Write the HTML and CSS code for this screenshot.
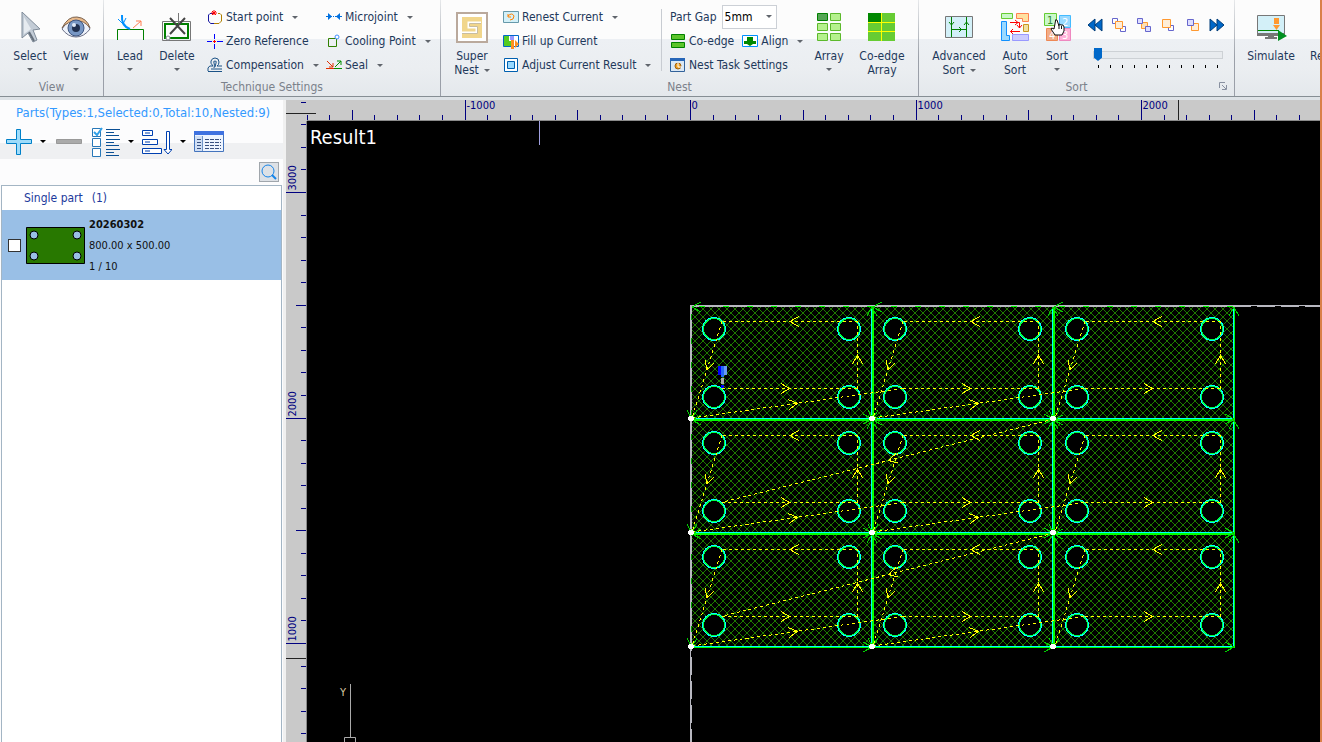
FILE: index.html
```html
<!DOCTYPE html>
<html lang="en">
<head>
<meta charset="utf-8">
<title>Nesting workspace</title>
<link rel="stylesheet" href="styles.css">
</head>
<body>
<header class="ribbon">
  <section class="group group-view">
    <div class="tools">
      <button class="big w46"><svg width="32" height="32"><path d="M7 2V28L13 23L18 32L22 30L18 20L25 19Z" transform="translate(1 -2)" fill="#c3ccd6" stroke="#7f8b99"/><path d="M10 5V22L17 17Z" fill="#e6ebf0"/><path d="M15 20L20 29" stroke="#66707c" stroke-width="2"/></svg><span>Select</span><i class="caret"></i></button>
      <button class="big w46"><svg width="32" height="32"><path d="M2 17Q9 5 18 6Q26 7 30 17Q24 25 16 25Q8 25 2 17Z" fill="#eef2fa" stroke="#6b6f86"/><path d="M2 16Q8 4 17 5Q27 6 30 16Q24 8 16 9Q8 9 2 16Z" fill="#e8b98a" stroke="#7b6350"/><circle cx="16" cy="16" r="8" fill="#7897c4" stroke="#3d5580"/><circle cx="16" cy="16" r="4" fill="#20304f"/><circle cx="14" cy="13" r="2" fill="#dfe9f7"/></svg><span>View</span><i class="caret"></i></button>
    </div>
    <h2>View</h2>
  </section>
  <section class="group group-tech">
    <div class="tools">
      <button class="big w46"><svg width="32" height="32" fill="none"><path d="M3.500 28V17.500H29.500V28" stroke="#008000"/><path d="M8 3Q7 14 16 17" stroke="#0090ff" stroke-width="2"/><path d="M4 7L9 12L12 6" stroke="#0090ff"/><path d="M19 16L27 9M22 9H27V14" stroke="#ff7f50"/></svg><span>Lead</span><i class="caret"></i></button>
      <button class="big w48"><svg width="32" height="32" fill="none"><path d="M1.500 9.500H29.500V28.500H1.500Z" stroke="#777"/><path d="M4 12H27V26H4Z" stroke="#008000" stroke-width="2"/><path d="M17.500 1V12" stroke="#777"/><path d="M9 6L24 22M24 6L9 22" stroke="#444" stroke-width="2"/><circle cx="7" cy="26" r="2" stroke="#889" fill="#fff"/></svg><span>Delete</span><i class="caret"></i></button>
      <div class="rows rows-start">
        <button class="small"><svg width="16" height="16" fill="none"><path d="M6 4.500H3L1.500 6V12L3.500 14.500H7" stroke="#1616a0"/><path d="M7 14.500H12L14.500 12V6L13 4.500H11" stroke="#b08000"/><path d="M5 2L9 6M9 2L5 6M7 1V6M4 4H10" stroke="#f00"/></svg>Start point<i class="caret"></i></button>
        <button class="small"><svg width="16" height="16" class="crisp"><path d="M7.500 1V6M7.500 11V16M0 8.500H5M10 8.500H16" stroke="#0000ff"/><path d="M6 8.500H9M7.500 7V10" stroke="#ff0000"/></svg>Zero Reference</button>
        <button class="small"><svg width="16" height="16" fill="none" stroke="#1b5286"><path d="M1 14.500H15M1 14V11Q2 8 6 9Q3 6 4 4Q5 1 8 1Q12 1 12 5Q12 8 10 9H15M4 12H15M7 11Q8 8 7 6Q6 4 8 4Q10 4 9 6L8 10"/></svg>Compensation<i class="caret"></i></button>
      </div>
      <div class="rows">
        <button class="small"><svg width="16" height="16"><path d="M0 7.500H6M10 7.500H16" stroke="#0070e0" stroke-width="1"/><path d="M2 4L6 7.500L2 11ZM14 4L10 7.500L14 11Z" fill="#0070e0"/><path d="M7 7.500H10" stroke="#0070e0" stroke-dasharray="1 1"/></svg>Microjoint<i class="caret"></i></button>
        <button class="small"><svg width="16" height="16" fill="none"><path d="M2.500 5.500H10.500V13.500H2.500Z" stroke="#308000"/><circle cx="11" cy="4" r="2" stroke="#4090ff" fill="#fff"/></svg>Cooling Point<i class="caret"></i></button>
        <button class="small"><svg width="16" height="16" fill="none"><path d="M0 11.500H16" stroke="#009000"/><path d="M0 11.500H8" stroke="#e03000"/><path d="M1 4L7 10M7 6V10H3" stroke="#e03000"/><path d="M9 10L15 4M11 4H15V8" stroke="#009000"/></svg>Seal<i class="caret"></i></button>
      </div>
    </div>
    <h2>Technique Settings</h2>
  </section>
  <section class="group group-nest">
    <div class="tools">
      <button class="big w50"><svg width="32" height="32"><path d="M1 1H31V30H1Z" fill="#fff" stroke="#baa99c" stroke-width="2"/><path d="M6 5H26V26H6Z" fill="#f1d68c"/><path d="M25 10.500H12.500V15.500H20.500V20.500H6" fill="none" stroke="#fff" stroke-width="2"/><path d="M25 11.500H13.500V14.500H21.500V21.500H6" fill="none" stroke="#c8bda0"/></svg><span>Super</span><span class="line">Nest<i class="caret"></i></span></button>
      <div class="rows rows-nest">
        <button class="small"><svg width="16" height="16" fill="none"><path d="M.5 2.500H15.500V13.500H.5Z" fill="#d3f0f8" stroke="#6699aa"/><path d="M5 5V8H8M5 7Q9 3 11 7Q11 11 7 11" stroke="#ff8000"/></svg>Renest Current<i class="caret"></i></button>
        <button class="small"><svg width="16" height="16"><path d="M.5 2.500H15.500V13.500H.5Z" fill="#fff" stroke="#0068c9"/><path d="M1 3H6V8H10V13H1Z" fill="#5c2"/><path d="M7 3H11V7H7Z" fill="#99f"/><path d="M8 7H11V16H8ZM12 7L16 11L12 15Z" fill="#ff9020"/></svg>Fill up Current</button>
        <button class="small"><svg width="16" height="16"><path d="M1.500 1.500H14.500V14.500H1.500Z" fill="#fff" stroke="#0060b0"/><path d="M4.500 4.500H11.500V11.500H4.500Z" fill="#99d9ff" stroke="#0060b0"/></svg>Adjust Current Result<i class="caret"></i></button>
      </div>
      <div class="rows rows-gap">
        <div class="gap-row"><label for="gap">Part Gap</label><span class="combo"><select id="gap"><option>5mm</option></select><i class="caret"></i></span></div>
        <div class="pair"><button class="small"><svg width="16" height="16"><path d="M1.500 1.500H14.500V6.500H1.500ZM1.500 9.500H14.500V14.500H1.500Z" fill="#5cc52b" stroke="#008000"/></svg>Co-edge</button><button class="small"><svg width="16" height="16"><path d="M.5 2.500H15.500V13.500H.5Z" fill="#fff" stroke="#0090ff"/><path d="M5 4H11V8H14V11H2V8H5ZM5 11H11L8 13Z" fill="#008800"/></svg>Align<i class="caret"></i></button></div>
        <button class="small"><svg width="16" height="16"><path d="M.5 1.500H14.500V14.500H.5Z" fill="#dbe8f5" stroke="#33629a"/><path d="M0 1H15V4H0Z" fill="#2766b8"/><circle cx="8" cy="9" r="3" fill="#f0a020" stroke="#a06010"/><path d="M8 5V10H12" stroke="#fff" fill="none"/></svg>Nest Task Settings</button>
      </div>
      <button class="big w50"><svg width="32" height="32" fill="#b5f18d" stroke="#5cb92c"><path d="M4.500 1.500H14.500V8.500H4.500Z" fill="#55a555" stroke="#008000"/><path d="M17.500 1.500H27.500V8.500H17.500ZM4.500 11.500H14.500V18.500H4.500ZM17.500 11.500H27.500V18.500H17.500ZM4.500 21.500H14.500V28.500H4.500ZM17.500 21.500H27.500V28.500H17.500Z"/></svg><span>Array</span><i class="caret"></i></button>
      <button class="big w56"><svg width="32" height="32"><path d="M2 1H29V29H2Z" fill="#66cc33"/><path d="M2 1H15V10H2Z" fill="#008800"/><path d="M15.500 1V29M2 10.500H29M2 19.500H29" stroke="#ff0"/></svg><span>Co-edge</span><span class="line">Array</span></button>
    </div>
    <h2>Nest</h2>
  </section>
  <section class="group group-sort">
    <div class="tools">
      <button class="big w80"><svg width="32" height="32" fill="none"><path d="M2.500 4.500H29.500V25.500H2.500Z" fill="#d3f0f8" stroke="#777"/><path d="M8.500 5V25M23.500 5V25M8.500 17.500H23.500M6 10L8.500 13L11 10M21 13L23.500 10L26 13M16 15L18.500 17.500L16 20" stroke="#008000"/></svg><span>Advanced</span><span class="line">Sort<i class="caret"></i></span></button>
      <button class="big w32"><svg width="32" height="32"><path d="M2.500 1.500H13.500V6.500H2.500Z" fill="#caf8ca" stroke="#6c3"/><path d="M17.500 1.500H29.500V9.500H23.500V6.500H17.500Z" fill="#ffe0a0" stroke="#ff8050"/><path d="M2.500 9.500H7.500V23.500H10.500V28.500H2.500Z" fill="#99d9ff" stroke="#1090ff"/><path d="M24.500 12.500H29.500V19.500H24.500Z" fill="#f0e0a0" stroke="#c89820"/><path d="M13.500 22.500H29.500V28.500H13.500Z" fill="#ccf" stroke="#99f"/><path d="M11 10.500H20.500V16M18 13L20.500 16L23 13M16 8L19 10.500L16 13M21 19.500H11.500M14 17L11.500 19.500L14 22" fill="none" stroke="#f00"/></svg><span>Auto</span><span class="line">Sort</span></button>
      <button class="big w52"><svg width="32" height="32"><path d="M3.500 1.500H15.500V13.500H3.500Z" fill="#caf8ca" stroke="#6c3"/><path d="M18.500 3.500H29.500V15.500H18.500Z" fill="#99d9ff" stroke="#4bf"/><path d="M5.500 16.500H16.500V28.500H5.500Z" fill="#f2ad87" stroke="#ee8855"/><path d="M18.500 16.500H29.500V28.500H18.500Z" fill="#ffb0d8" stroke="#ee88c0"/><g font-size="11"><text x="6" y="12" fill="#383">1</text><text x="21" y="14" fill="#fff">2</text><text x="8" y="27" fill="#fff">4</text><text x="21" y="27" fill="#fff">3</text></g><path d="M14.500 9Q14 7 16 8L18 14V12L20 13L22 13L23 15V19L21 23H14L10 17Q10 15 13 17Z" fill="#fff" stroke="#111"/><path d="M18 14V17M20.500 14V17" stroke="#111"/></svg><span>Sort</span><i class="caret"></i></button>
      <div class="sequence">
        <div class="steps">
          <button aria-label="First"><svg width="16" height="16"><path d="M8 2V14L1 8ZM15 2V14L8 8Z" fill="#0068c9" stroke="#003c78"/></svg></button>
          <button aria-label="Send back"><svg width="16" height="16" fill="#fff"><path d="M1.500 1.500H6.500V6.500H1.500ZM9.500 9.500H14.500V14.500H9.500Z" stroke="#66c"/><path d="M4.500 4.500H11.500V11.500H4.500Z" fill="#ffeed8" stroke="#ff9930"/></svg></button>
          <button aria-label="Step back"><svg width="16" height="16"><path d="M5.500 5.500H11.500V11.500H5.500Z" fill="#ffe0b0" stroke="#ff9930"/><path d="M1.500 1.500H6.500V6.500H1.500ZM9.500 9.500H14.500V14.500H9.500Z" fill="#ddf" stroke="#66c"/></svg></button>
          <button aria-label="Bring front"><svg width="16" height="16"><path d="M8.500 8.500H13.500V13.500H8.500Z" fill="#fff" stroke="#66c"/><path d="M2.500 2.500H10.500V10.500H2.500Z" fill="#ffeed8" stroke="#ff9930"/></svg></button>
          <button aria-label="Step forward"><svg width="16" height="16"><path d="M6.500 6.500H13.500V13.500H6.500Z" fill="#ffeed8" stroke="#ff9930"/><path d="M2.500 2.500H8.500V8.500H2.500Z" fill="#ddf" stroke="#66c"/></svg></button>
          <button aria-label="Last"><svg width="16" height="16"><path d="M1 2V14L8 8ZM8 2V14L15 8Z" fill="#0068c9" stroke="#003c78"/></svg></button>
        </div>
        <input class="slider" type="range" min="0" max="10" value="0" aria-label="Sort position">
        <div class="marks"><i></i><i></i><i></i><i></i><i></i><i></i><i></i><i></i><i></i><i></i><i></i></div>
      </div>
    </div>
    <h2>Sort</h2>
    <button class="launcher" aria-label="Sort options"><svg width="8" height="8" fill="none" stroke="#8890a0"><path d="M.5 6V.5H6M3 3L7 7M7.500 3V7.500H3"/></svg></button>
  </section>
  <section class="group group-run">
    <div class="tools">
      <button class="big w72"><svg width="32" height="32"><path d="M2.500 3.500H29.500V22.500H2.500Z" fill="#d3f0f8" stroke="#777"/><path d="M2 21H30V24H2Z" fill="#777"/><path d="M3 18.500H24" stroke="#008800"/><path d="M13 24H19V25H22V27H10V25H13Z" fill="#777"/><path d="M19 6H24V12H19ZM18 13H25L21.500 18Z" fill="#ff9930"/><path d="M23 18L32 24L23 29Z" fill="#009020"/></svg><span>Simulate</span></button>
      <button class="big cut"><svg width="32" height="32"><path d="M12 3H31V23H12Z" fill="#58b0f0"/></svg><span>Re</span></button>
    </div>
  </section>
</header>
<main class="workspace">
  <aside class="sidebar">
    <h1>Parts(Types:1,Selected:0,Total:10,Nested:9)</h1>
    <div class="partbar">
      <button aria-label="Add part"><svg width="26" height="26"><path d="M10.500 .5H14.500V10.500H25.500V14.500H14.500V25.500H10.500V14.500H.5V10.500H10.500Z" fill="#9edcfb" stroke="#0080c8"/></svg><i class="caret dark"></i></button>
      <button aria-label="Remove part"><svg width="26" height="26"><path d="M.5 10.500H25.500V14.500H.5Z" fill="#aaa" stroke="#999"/></svg></button>
      <button aria-label="Check parts"><svg width="28" height="30"><path d="M.5 1.500H8.500V9.500H.5ZM.5 11.500H8.500V19.500H.5ZM.5 21.500H8.500V29.500H.5Z" fill="#fff" stroke="#2878b8"/><path d="M2 5L5 8L10 1" stroke="#30a0e8" stroke-width="2" fill="none"/><path d="M14 2.500H28M14 5.500H22M14 8.500H27M14 12.500H28M14 15.500H22M14 18.500H27M14 22.500H28M14 25.500H22M14 28.500H27" stroke="#0a4f94"/></svg><i class="caret dark"></i></button>
      <button aria-label="Order parts"><svg width="30" height="26" fill="#fff" stroke="#0040b0"><path d="M.5 1.500H10.500V6.500H.5ZM.5 10.500H15.500V15.500H.5ZM.5 19.500H19.500V24.500H.5ZM3 4H8M3 13H8M3 22H8M24.500 2.500H27.500V20.500H30L26 25L22 20.500H24.500Z"/></svg><i class="caret dark"></i></button>
      <button aria-label="Part table"><svg width="30" height="22"><path d="M.5 .5H29.500V20.500H.5Z" fill="#edf4ff" stroke="#4474bd"/><path d="M0 0H30V4H0Z" fill="#3f72e0"/><path d="M1 5H8V20H1Z" fill="#d0dff5"/><path d="M8.500 5V20" stroke="#6f94c8"/><path d="M3 8.500H7M3 11.500H7M3 14.500H7M3 17.500H7M11 8.500H27M11 11.500H27M11 14.500H27M11 17.500H27" stroke="#385080" stroke-dasharray="4 1"/></svg></button>
    </div>
    <div class="searchbar"><button class="search" aria-label="Search"><svg width="18" height="18" fill="none" stroke="#1684e8"><circle cx="8" cy="8" r="6"/><path d="M12 12L16 16" stroke-width="2"/></svg></button></div>
    <div class="partlist">
      <h2>Single part<span>(1)</span></h2>
      <div class="part">
        <input id="p1" type="checkbox">
        <svg width="60" height="38" fill="#99bfe6" stroke="#000"><path d="M.5 1.500H58.500V37.500H.5Z" fill="#287800"/><circle cx="8" cy="9" r="4"/><circle cx="51" cy="9" r="4"/><circle cx="8" cy="30" r="4"/><circle cx="51" cy="30" r="4"/></svg>
        <label for="p1"><b>20260302</b><span>800.00 x 500.00</span><span>1 / 10</span></label>
      </div>
    </div>
  </aside>
  <div class="ruler-corner"><svg width="100%" height="100%"><path d="M15 2.500H20" class="tick"/><path d="M0 13.500H30" class="pos"/></svg></div>
  <div class="ruler-top"><svg id="ruler-x" width="100%" height="100%"></svg></div>
  <div class="ruler-left"><svg id="ruler-y" width="100%" height="100%"></svg></div>
  <div class="canvas">
    <svg id="scene" width="100%" height="100%">
      <defs><pattern id="hatch" width="8" height="8" patternUnits="userSpaceOnUse"><path d="M-1 -1L9 9M9 -1L-1 9" class="hatch-line crisp"/></pattern></defs>
      <text x="3" y="23" class="result">Result1</text>
      <path d="M232.500 0V24" stroke="#a0a0e0"/>
    </svg>
  </div>
</main>
<script src="script.js"></script>
</body>
</html>
```
FILE: styles.css
```css
* { box-sizing: border-box; }
body {
  margin: 0;
  height: 100vh;
  display: flex;
  flex-direction: column;
  overflow: hidden;
  border-right: 2px solid #d98048;
  font: 12px/14px "DejaVu Sans Condensed", "Noto Sans", sans-serif;
  color: #1e395b;
  background: #f0f0f0;
}
button { border: 0; padding: 0; background: none; font: inherit; color: inherit; }
h1, h2 { margin: 0; font: inherit; }
svg { display: block; flex: none; }
.caret { flex: none; width: 0; height: 0; border: 3px solid transparent; border-top-color: #60656c; border-bottom: 0; }
.caret.dark { border-top-color: #000; }

.ribbon {
  display: flex;
  flex: none;
  overflow: hidden;
  height: 100px;
  background: linear-gradient(#fcfcfc 39px, #edf0f4 39px, #ebeef1 68px, #e4e8ec 96px, #868e94 96px, #868e94 97px, #dde2e6 97px);
}
.group { position: relative; flex: none; height: 96px; border-right: 1px solid; border-image: linear-gradient(#e8eaec, #9a9fa8 60%) 1; }
.group-run { flex: 1 0 0; border: 0; min-width: 0; }
.tools { display: flex; height: 80px; }
.group h2 { text-align: center; color: #7b818b; }
.group-view .tools { padding: 0 4px 0 7px; }
.group-tech .tools { padding-left: 3px; }
.group-nest .tools { padding: 0 8px 0 6px; }
.big { display: flex; flex-direction: column; align-items: center; flex: none; padding-top: 12px; white-space: nowrap; }
.big > svg { margin-bottom: 5px; }
.big > .caret { margin-top: 5px; }
.line { display: flex; align-items: center; gap: 5px; }
.w32 { width: 32px; }
.w46 { width: 46px; }
.w48 { width: 48px; }
.w50 { width: 50px; }
.w52 { width: 52px; }
.w56 { width: 56px; }
.w72 { width: 72px; }
.w80 { width: 80px; }
.cut { align-items: flex-start; padding-left: 3px; }
.rows { display: grid; grid-template-rows: repeat(3, 24px); align-items: center; padding-top: 5px; width: 114px; }
.rows-start { width: 125px; padding-left: 6px; }
.rows-nest { width: 164px; padding-left: 6px; }
.rows-gap { width: 143px; padding-left: 8px; position: relative; border-left: 1px solid; border-image: linear-gradient(transparent 10px, #c8ccd2 10px, #c8ccd2 70px, transparent 70px) 1; }
.small { display: flex; align-items: center; gap: 3px; white-space: nowrap; }
.small .caret { margin-left: 6px; }
.gap-row { display: flex; align-items: center; gap: 5px; white-space: nowrap; }
.pair { display: flex; gap: 8px; }
.combo { position: relative; width: 55px; height: 24px; }
.combo select { width: 100%; height: 100%; appearance: none; border: 1px solid #ccd0d6; background: #fff; padding: 0 2px; font: inherit; color: #000; }
.combo .caret { position: absolute; right: 5px; top: 10px; pointer-events: none; }
.sequence { width: 151px; padding-top: 13px; }
.steps { display: flex; justify-content: space-between; width: 146px; }
.steps button { width: 24px; height: 24px; display: grid; place-items: center; }
.slider { display: block; appearance: none; width: 130px; height: 14px; margin: 11px 0 0 10px; background: none; }
.slider::-webkit-slider-runnable-track { height: 8px; border: 1px solid #cdd1d5; background: #e8ebee; }
.slider::-webkit-slider-thumb { appearance: none; width: 8px; height: 13px; margin-top: -4px; background: #0068c9; clip-path: polygon(0 0, 100% 0, 100% 75%, 50% 100%, 0 75%); }
.marks { display: flex; justify-content: space-between; width: 120px; margin: 3px 0 0 15px; }
.marks i { width: 1px; height: 3px; background: #000; }
.launcher { position: absolute; right: 7px; bottom: 6px; }

.workspace { flex: 1; min-height: 0; display: grid; grid-template: 21px 1fr / 286px 21px 1fr; }
.sidebar { grid-row: 1 / 3; display: flex; flex-direction: column; margin-right: 3px; background: #fcfcfd; white-space: nowrap; }
.sidebar h1 { padding: 6px 0 4px 16px; font-size: 13px; color: #3399ff; }
.partbar { display: flex; align-items: center; height: 35px; padding-left: 6px; background: linear-gradient(#fcfcfd 19px, #eff0f2 19px); }
.partbar button { display: flex; align-items: center; gap: 8px; margin-right: 10px; }
.partbar button:nth-child(n+3) { margin-right: 8px; }
.searchbar { display: flex; justify-content: flex-end; padding: 3px 4px 3px 0; }
.search { width: 20px; height: 20px; border: 1px solid #a0a6ac; background: #dde1e6; }
.partlist { flex: 1; margin: 0 1px; border: 1px solid #a3b5c4; border-bottom: 0; background: #fff; }
.partlist h2 { padding: 5px 22px; color: #1c3a9c; }
.partlist h2 span { margin-left: 9px; }
.part { display: flex; align-items: center; height: 70px; padding-left: 6px; background: #99bfe6; color: #111; font-size: 11px; }
.part input { appearance: none; width: 13px; height: 13px; margin: 0 5px 0 0; border: 1px solid #333; background: #fff; }
.part label { display: grid; line-height: 21px; margin-left: 3px; }

.ruler-corner, .ruler-top, .ruler-left { background: #c9c9c9; }
.ruler-corner svg { overflow: visible; }
.ruler-top { border-bottom: 1px solid #8a8a8a; }
.ruler-left { border-right: 1px solid #8a8a8a; }
.ruler-corner, .ruler-top, .ruler-left, .canvas { min-width: 0; min-height: 0; overflow: hidden; }
.ruler-corner { position: relative; overflow: visible; }
.canvas { background: #000; }
.tick { stroke: #000080; fill: none; }
.pos { stroke: #222; }
.rule-label { fill: #000080; font-size: 11px; }
.result { fill: #fff; font-size: 20px; }
.axis { fill: #d8c8a0; font-size: 11px; }
.axis-line { stroke: #aaa; fill: none; }
.hatch-line { stroke: #1f7a00; fill: none; }
.hole { fill: #000; stroke: #00ff40; }
.hole-cut { fill: none; stroke: #00ffff; }
.cyan { stroke: #00ffff; }
.green { stroke: #00ff00; fill: none; }
.mark { stroke: #00d000; fill: none; }
.travel { stroke: #ffff00; stroke-dasharray: 3 3; fill: none; }
.head { stroke: #ffff00; fill: none; }
.plate { stroke: #b8b8c0; stroke-width: 2; fill: none; }
.point { fill: #fff; }
.crisp { shape-rendering: crispEdges; }
```
FILE: script.js
```js
const NS = 'http://www.w3.org/2000/svg';
const scene = document.getElementById('scene');
const add = (parent, tag, attrs, text) => {
  const el = document.createElementNS(NS, tag);
  for (const key in attrs) el.setAttribute(key, attrs[key]);
  if (text) el.textContent = text;
  parent.append(el);
  return el;
};
const path = (d, cls) => add(scene, 'path', { d, class: cls });

// Rulers: one tick per 100 mm, labels each 1000 mm.
const STEP = 22.55;
const originX = 383.5;
const originY = 748;
const rulerX = document.getElementById('ruler-x');
const rulerY = document.getElementById('ruler-y');
const rulerWidth = rulerX.getBoundingClientRect().width;
const rulerHeight = rulerY.getBoundingClientRect().height;
let ticks = '';
for (let i = -17; originX + i * STEP < rulerWidth; i++) {
  const x = Math.floor(originX + i * STEP) + 0.5;
  ticks += `M${x} 20V${i % 10 === 0 ? 0 : i % 5 === 0 ? 10 : 15}`;
  if (i % 10 === 0) add(rulerX, 'text', { x: x + 1, y: 9, class: 'rule-label' }, String(i * 100));
}
add(rulerX, 'path', { d: ticks, class: 'tick' });
add(rulerX, 'path', { d: 'M871.5 0V20', class: 'pos' });
ticks = '';
for (let i = 33; originY - i * STEP < rulerHeight; i--) {
  const y = Math.floor(originY - i * STEP) + 0.5;
  ticks += `M20 ${y}H${i % 10 === 0 ? 0 : i % 5 === 0 ? 10 : 15}`;
  if (i % 10 === 0) add(rulerY, 'text', { transform: `translate(10 ${y - 2}) rotate(-90)`, class: 'rule-label' }, String(i * 100));
}
add(rulerY, 'path', { d: ticks, class: 'tick' });
add(rulerY, 'path', { d: 'M0 537.5H20', class: 'pos' });

// Nested sheet: three columns and three rows of one part.
const xs = [384, 565, 746, 927];
const ys = [185, 298, 412, 526];
add(scene, 'rect', { x: 384, y: 185, width: 543, height: 341, fill: 'url(#hatch)' });
path('M383 185H4000M384 184V4000', 'plate crisp');
const notch = (d, stroke) => add(scene, 'path', { d, stroke, 'stroke-dasharray': '6 18', class: 'crisp' });
notch('M392 185.5H927', '#00ff00');
notch('M944 185.5H4000', '#000');
notch('M384.5 193V526', '#00a000');
notch('M384.5 530V4000', '#000');

const head = (x, y, dx, dy, cls) => {
  const n = Math.hypot(dx, dy);
  const [u, v] = [dx / n, dy / n];
  path(`M${x - 9 * u - 5 * v} ${y - 9 * v + 5 * u}L${x} ${y}L${x - 9 * u + 5 * v} ${y - 9 * v - 5 * u}`, cls);
};
const travel = (x1, y1, x2, y2) => {
  path(`M${x1} ${y1}L${x2} ${y2}`, 'travel crisp');
  head((x1 + x2) / 2, (y1 + y2) / 2, x2 - x1, y2 - y1, 'head crisp');
};

for (let r = 0; r < 3; r++) for (let c = 0; c < 3; c++) {
  const x = 384 + Math.round(c * 181.4);
  const y = 185 + r * 114;
  for (const [hx, hy] of [[23, 23], [158, 23], [23, 91], [158, 91]]) {
    add(scene, 'circle', { cx: x + hx, cy: y + hy, r: 10.5, class: 'hole crisp' });
    add(scene, 'circle', { cx: x + hx, cy: y + hy, r: 11.5, class: 'hole-cut crisp' });
  }
}
for (let i = 1; i < 4; i++) {
  const y = ys[i] - 1;
  path(`M384 ${y + 0.5}H928`, 'cyan crisp');
  path(`M384 ${y + 1.5}H928`, 'green crisp');
  if (i < 3) path(`M384 ${y + 2.5}H928`, 'green crisp');
  const x = i < 3 ? xs[i] - 1 : 926;
  path(`M${x + 0.5} 186V526`, 'cyan crisp');
  path(`M${x + 1.5} 186V526`, 'green crisp');
  if (i < 3) path(`M${x + 2.5} 186V526`, 'green crisp');
}
for (let r = 0; r < 3; r++) for (let c = 0; c < 3; c++) {
  const [x1, x2, y1, y2] = [xs[c] + 1, xs[c + 1], ys[r] + 1, ys[r + 1]];
  head(x2, y2, 1, 0, 'mark crisp');
  head(x2, y1, 0, -1, 'mark crisp');
  head(x1, y1, -1, 0, 'mark crisp');
  head(x1, y2, 0, 1, 'mark crisp');
}
for (let r = 0; r < 3; r++) for (let c = 0; c < 3; c++) {
  const x = 384 + Math.round(c * 181.4);
  const y = 185 + r * 114;
  const low = y + 82.5;
  const high = y + 15.5;
  travel(x + 31, low, x + 166.5, low);
  travel(x + 166.5, low, x + 166.5, high);
  travel(x + 166.5, high, x + 31, high);
  travel(x + 31, high, x + 1, y + 112);
  if (c < 2) travel(x + 1, y + 112, x + 212, low);
  else if (r < 2) travel(x, y + 113, 416, y + 196);
}
for (let r = 1; r < 4; r++) for (let c = 0; c < 3; c++)
  path(`M${xs[c] - 3} ${ys[r] - 2}h6v3h-6zM${xs[c] - 2} ${ys[r] - 3}h4v5h-4z`, 'point');

// Cutting head position.
add(scene, 'path', { d: 'M411 245h4v9h-4z', fill: '#0000ff' });
add(scene, 'path', { d: 'M414 245h3v11h-3z', fill: '#2468f4' });
add(scene, 'path', { d: 'M417 245h3v9h-3z', fill: '#6898f4' });
add(scene, 'path', { d: 'M414 257h3v6h-3z', fill: '#aaa' });
add(scene, 'path', { d: 'M414 264h3v3h-3z', fill: '#0000ff' });

// Axis marker.
path('M43.5 563V617M37.5 616.5H48.5V628H37.5Z', 'axis-line');
add(scene, 'text', { x: 33, y: 575, class: 'axis' }, 'Y');
```
